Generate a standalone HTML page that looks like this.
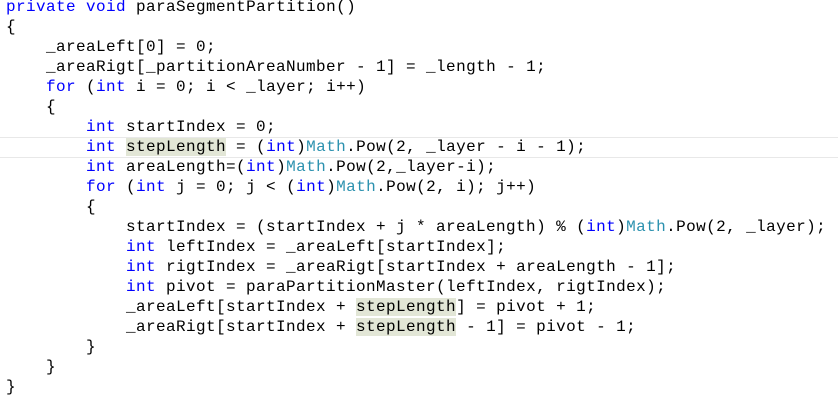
<!DOCTYPE html>
<html><head><style>
body{margin:0;background:#fff;width:838px;height:405px;overflow:hidden;position:relative}
.c{position:absolute;top:-3px;left:0;font-family:"Liberation Mono",monospace;font-size:16px;letter-spacing:0.4px;line-height:20px;color:#000}
.l{height:20px;position:relative;white-space:pre}
.k{color:#0000ff}.t{color:#2b91af}.h{background:#e2e6d6}
.cur{position:absolute;left:0;right:0;top:137px;height:19px;border:1px solid #e8e8e8;border-left:none;border-right:none}
</style></head><body>
<div class="cur"></div>
<div class="c"><div class="l" style="left:6px"><span class="k">private</span> <span class="k">void</span> paraSegmentPartition()</div><div class="l" style="left:6px">{</div><div class="l" style="left:46px">_areaLeft[0] = 0;</div><div class="l" style="left:46px">_areaRigt[_partitionAreaNumber - 1] = _length - 1;</div><div class="l" style="left:46px"><span class="k">for</span> (<span class="k">int</span> i = 0; i &lt; _layer; i++)</div><div class="l" style="left:46px">{</div><div class="l" style="left:86px"><span class="k">int</span> startIndex = 0;</div><div class="l" style="left:86px"><span class="k">int</span> <span class="h">stepLength</span> = (<span class="k">int</span>)<span class="t">Math</span>.Pow(2, _layer - i - 1);</div><div class="l" style="left:86px"><span class="k">int</span> areaLength=(<span class="k">int</span>)<span class="t">Math</span>.Pow(2,_layer-i);</div><div class="l" style="left:86px"><span class="k">for</span> (<span class="k">int</span> j = 0; j &lt; (<span class="k">int</span>)<span class="t">Math</span>.Pow(2, i); j++)</div><div class="l" style="left:86px">{</div><div class="l" style="left:126px">startIndex = (startIndex + j * areaLength) % (<span class="k">int</span>)<span class="t">Math</span>.Pow(2, _layer);</div><div class="l" style="left:126px"><span class="k">int</span> leftIndex = _areaLeft[startIndex];</div><div class="l" style="left:126px"><span class="k">int</span> rigtIndex = _areaRigt[startIndex + areaLength - 1];</div><div class="l" style="left:126px"><span class="k">int</span> pivot = paraPartitionMaster(leftIndex, rigtIndex);</div><div class="l" style="left:126px">_areaLeft[startIndex + <span class="h">stepLength</span>] = pivot + 1;</div><div class="l" style="left:126px">_areaRigt[startIndex + <span class="h">stepLength</span> - 1] = pivot - 1;</div><div class="l" style="left:86px">}</div><div class="l" style="left:46px">}</div><div class="l" style="left:6px">}</div></div>
</body></html>
